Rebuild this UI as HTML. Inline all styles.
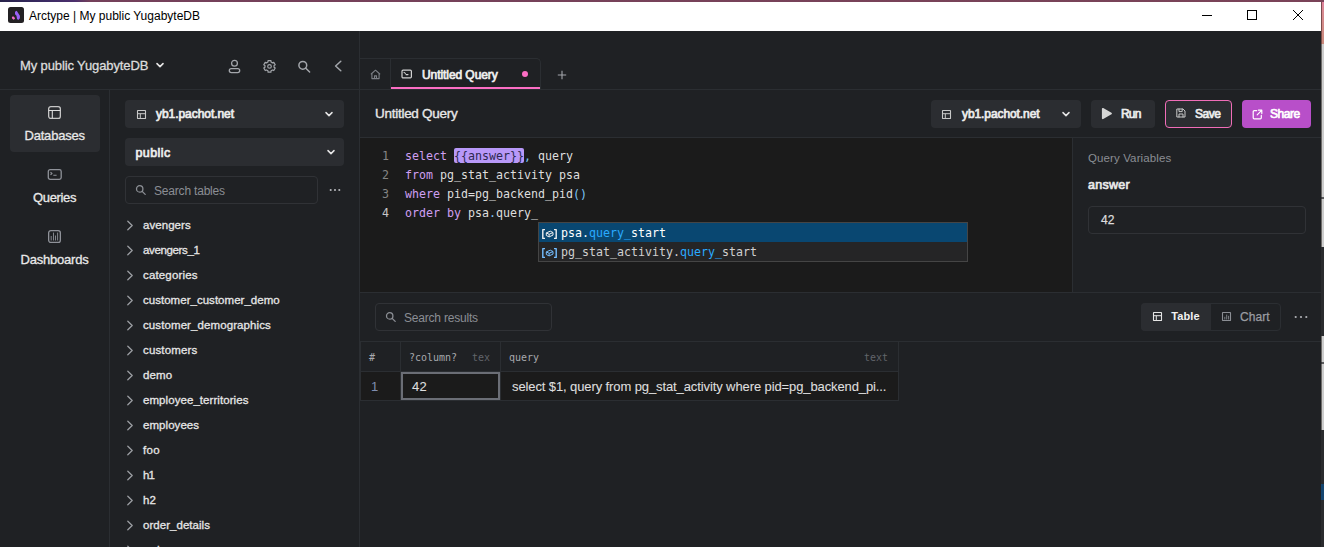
<!DOCTYPE html>
<html lang="en">
<head>
<meta charset="utf-8">
<title>Arctype | My public YugabyteDB</title>
<style>
*{box-sizing:border-box;margin:0;padding:0}
html,body{width:1324px;height:547px;overflow:hidden;background:#1f2124}
body{position:relative;font-family:"Liberation Sans",sans-serif;color:#e6e6e6;font-size:12px;-webkit-font-smoothing:antialiased}
.a{position:absolute}
.t{position:absolute;white-space:nowrap;line-height:1;transform:translateY(-50%)}
.hl{position:absolute;height:1px;background:#2b2e32}
.vl{position:absolute;width:1px;background:#2b2e32}
.btn{position:absolute;background:#2b2d31;border-radius:4px}
.m{font-family:"DejaVu Sans Mono","Liberation Mono",monospace}
.b{font-weight:normal;-webkit-text-stroke:0.7px currentColor}
svg{position:absolute;overflow:visible}
.ic{fill:none;stroke:#a3a6ab;stroke-width:1.3;stroke-linecap:round;stroke-linejoin:round}
.code{position:absolute;left:405px;font-family:"DejaVu Sans Mono","Liberation Mono",monospace;font-size:11.63px;line-height:19px;height:19px;white-space:pre;color:#dedede}
.ln{position:absolute;left:372px;width:17px;text-align:right;font-family:"DejaVu Sans Mono","Liberation Mono",monospace;font-size:11.63px;line-height:19px;height:19px;color:#858585}
.kw{color:#cf9ff2}
.br{color:#7cc5f6}
.dl{color:#7cc5f6}
.li{position:absolute;left:143px;white-space:nowrap;line-height:1;transform:translateY(-50%);font-size:11.5px;color:#e6e6e6;-webkit-text-stroke:0.3px #e6e6e6}
</style>
</head>
<body>
<!-- window chrome -->
<div class="a" id="topstrip" style="left:0;top:0;width:1324px;height:2px;background:linear-gradient(90deg,#27224a 0px,#3a2a63 45px,#4c2f6c 75px,#74405a 90px,#7a4358 1324px)"></div>
<div class="a" id="titlebar" style="left:0;top:2px;width:1321px;height:29px;background:#fff"></div>
<div class="a" style="left:8px;top:7px;width:16px;height:16px;border-radius:2.5px;background:#232124"></div>
<svg style="left:8px;top:7px" width="16" height="16" viewBox="0 0 16 16"><path d="M7 4.700L8.700 3.800L11.900 8.700V11.300L10.300 12.900L9 12.100L8.500 8.700L7 7.200Z" fill="#9960f6"/><path d="M3.900 9.900L5.200 9.200L7 10.900L6.700 12.100L5.600 12.700L4.100 11.600Z" fill="#f56cca"/></svg>
<div class="t" style="left:29px;top:16px;font-size:12px;color:#000">Arctype | My public YugabyteDB</div>
<svg style="left:1200px;top:8px" width="110" height="16" viewBox="0 0 110 16"><g fill="none" stroke="#000" stroke-width="1"><path d="M2 7.5H12"/><rect x="47.5" y="2.5" width="9" height="9"/><path d="M93 2L103 12M103 2L93 12"/></g></svg>

<!-- right strip of background window -->
<div class="a" style="left:1321px;top:2px;width:1px;height:545px;background:linear-gradient(180deg,#7a4a50 0px,#7c5048 42px,#6e6c6a 42px,#6e6c6a 195px,#3a3a3c 195px,#3a3a3c 197px,#6e6c6a 197px,#6e6c6a 245px,#2a2b2e 245px,#2a2b2e 334px,#6e6c6a 334px,#6e6c6a 360px,#3a3a3c 360px,#3a3a3c 362px,#6e6c6a 362px,#6e6c6a 428px,#2a2b2e 428px,#2a2b2e 482px,#14456f 482px,#14456f 498px,#2a2b2e 498px)"></div>
<div class="a" style="left:1322px;top:2px;width:2px;height:545px;background:linear-gradient(180deg,#e0809c 0px,#d88a90 10px,#c98a7c 42px,#cdcdcd 42px,#cdcdcd 195px,#5a5a5c 195px,#5a5a5c 197px,#cdcdcd 197px,#cdcdcd 245px,#2a2b2e 245px,#2a2b2e 334px,#cdcdcd 334px,#cdcdcd 360px,#5a5a5c 360px,#5a5a5c 362px,#cdcdcd 362px,#cdcdcd 428px,#2a2b2e 428px,#2a2b2e 482px,#14456f 482px,#14456f 498px,#2a2b2e 498px)"></div>

<!-- structural lines -->
<div class="vl" style="left:359px;top:31px;height:516px"></div>
<div class="hl" style="left:0;top:89px;width:1321px"></div>
<div class="vl" style="left:109px;top:90px;height:457px"></div>
<div class="hl" style="left:360px;top:137px;width:961px"></div>
<div class="a" id="editor" style="left:360px;top:138px;width:712px;height:154px;background:#1b1b1b"></div>
<div class="vl" style="left:1072px;top:138px;height:154px"></div>
<div class="hl" style="left:360px;top:292px;width:961px"></div>
<div class="hl" style="left:360px;top:341px;width:961px"></div>

<!-- sidebar header -->
<div class="t b" id="t_ws" style="letter-spacing:-0.118px;left:20px;top:65px;font-size:13px;color:#dcdcdc;font-weight:normal;-webkit-text-stroke:0.3px #dcdcdc">My public YugabyteDB</div>
<svg style="left:155px;top:60px" width="10" height="10" viewBox="0 0 10 10"><path d="M2 3.6L5 6.6L8 3.6" fill="none" stroke="#e6e6e6" stroke-width="1.6" stroke-linecap="round" stroke-linejoin="round"/></svg>
<svg style="left:226px;top:58px" width="120" height="18" viewBox="0 0 120 18" class="ic">
 <circle cx="8.5" cy="5.2" r="2.9"/><rect x="3.3" y="10.6" width="10.4" height="4" rx="2"/>
 <path d="M44.94 2.63L42.06 2.63L41.93 4.08L40.54 4.88L39.22 4.27L37.78 6.76L38.97 7.60L38.97 9.20L37.78 10.04L39.22 12.53L40.54 11.92L41.93 12.72L42.06 14.17L44.94 14.17L45.07 12.72L46.46 11.92L47.78 12.53L49.22 10.04L48.03 9.20L48.03 7.60L49.22 6.76L47.78 4.27L46.46 4.88L45.07 4.08Z" stroke-width="1.2"/><circle cx="43.5" cy="8.4" r="1.800" stroke-width="1.2"/>
 <circle cx="76.8" cy="7.3" r="3.9" stroke-width="1.5"/><path d="M79.8 10.3L83.6 14" stroke-width="1.5"/>
 <path d="M114.8 3.2L109.6 8L114.8 12.8" stroke-width="1.5"/>
</svg>

<!-- nav column -->
<div class="btn" style="left:10px;top:95px;width:90px;height:57px;border-radius:4px"></div>
<svg style="left:47px;top:105px" width="15" height="15" viewBox="0 0 15 15" fill="none" stroke="#c6c6c6" stroke-width="1.3"><rect x="1.650" y="1.650" width="11.700" height="11.700" rx="2.200"/><path d="M1.650 5.500H13.350M5.300 5.500V13.350" stroke="#dcdcdc" stroke-width="1.100"/></svg>
<div class="t" id="t_db" style="letter-spacing:-0.206px;left:24.5px;top:135px;font-size:13px;color:#e8e8e8;-webkit-text-stroke:0.3px #e8e8e8">Databases</div>
<svg style="left:47px;top:168px" width="16" height="14" viewBox="0 0 16 14" fill="none" stroke="#8f9299" stroke-width="1.3"><rect x="1.300" y="1.650" width="12.900" height="9.700" rx="1.800"/><path d="M3.500 4.300L5 5.500L3.500 6.700M6.300 7.300H9.600" stroke-width="1.100" stroke-linejoin="round"/></svg>
<div class="t" id="t_q" style="letter-spacing:-0.347px;left:33px;top:197px;font-size:13px;color:#e8e8e8;-webkit-text-stroke:0.3px #e8e8e8">Queries</div>
<svg style="left:47px;top:229px" width="15" height="15" viewBox="0 0 15 15" fill="none" stroke="#8f9299" stroke-width="1.3"><rect x="1.650" y="1.650" width="11.700" height="11.700" rx="2.200"/><path d="M4.200 7V11.500M6.500 3.600V11.500M8.500 6.500V11.500M10.600 3.600V11.500" stroke-width=".9"/></svg>
<div class="t" id="t_d" style="letter-spacing:-0.211px;left:20.5px;top:259px;font-size:13px;color:#e8e8e8;-webkit-text-stroke:0.3px #e8e8e8">Dashboards</div>

<!-- sidebar dropdowns -->
<div class="btn" style="left:125px;top:100px;width:219px;height:28px"></div>
<svg style="left:137px;top:110px" width="10" height="10" viewBox="0 0 10 10" class="ic"><rect x=".5" y=".5" width="8" height="8" rx=".3" stroke="#c8c8c8" stroke-width="1.100" stroke-linejoin="miter"/><path d="M.5 3.700H8.500M3.300 3.700V8.500" stroke="#c8c8c8" stroke-width="1" stroke-linecap="butt"/></svg>
<div class="t b" id="t_conn1" style="letter-spacing:-0.052px;left:156px;top:114px;font-size:12px;color:#ededed">yb1.pachot.net</div>
<svg style="left:324px;top:109px" width="10" height="10" viewBox="0 0 10 10"><path d="M2 3.6L5 6.6L8 3.6" fill="none" stroke="#e6e6e6" stroke-width="1.5" stroke-linecap="round" stroke-linejoin="round"/></svg>
<div class="btn" style="left:125px;top:138px;width:219px;height:28px"></div>
<div class="t b" id="t_pub" style="letter-spacing:0.405px;left:135.5px;top:152.5px;font-size:12.5px;color:#ededed">public</div>
<svg style="left:326px;top:147px" width="10" height="10" viewBox="0 0 10 10"><path d="M2 3.6L5 6.6L8 3.6" fill="none" stroke="#e6e6e6" stroke-width="1.5" stroke-linecap="round" stroke-linejoin="round"/></svg>
<div class="a" style="left:125px;top:176px;width:193px;height:28px;border:1px solid #303236;border-radius:4px"></div>
<svg style="left:135px;top:184px" width="12" height="12" viewBox="0 0 12 12" class="ic"><circle cx="4.700" cy="4.900" r="3.200" stroke="#8b8e94" stroke-width="1.300"/><path d="M7.200 7.400L10.200 10.400" stroke="#8b8e94" stroke-width="1.300"/></svg>
<div class="t" id="t_st" style="letter-spacing:-0.192px;left:154px;top:190.5px;font-size:12px;color:#8b8e94">Search tables</div>
<svg style="left:329px;top:188px" width="12" height="4" viewBox="0 0 12 4"><circle cx="1.700" cy="2" r="1.050" fill="#b4b6ba"/><circle cx="6" cy="2" r="1.050" fill="#b4b6ba"/><circle cx="10.300" cy="2" r="1.050" fill="#b4b6ba"/></svg>

<!-- table list -->
<div id="list">
<svg style="left:126px;top:220px" width="8" height="11" viewBox="0 0 8 11"><path d="M1.8 1.2L6.2 5.5L1.8 9.800" fill="none" stroke="#9a9da2" stroke-width="1.3" stroke-linecap="round" stroke-linejoin="round"/></svg><div class="li" style="letter-spacing:0.048px;top:225.5px">avengers</div>
<svg style="left:126px;top:245px" width="8" height="11" viewBox="0 0 8 11"><path d="M1.8 1.2L6.2 5.5L1.8 9.800" fill="none" stroke="#9a9da2" stroke-width="1.3" stroke-linecap="round" stroke-linejoin="round"/></svg><div class="li" style="letter-spacing:-0.361px;top:250.5px">avengers_1</div>
<svg style="left:126px;top:270px" width="8" height="11" viewBox="0 0 8 11"><path d="M1.8 1.2L6.2 5.5L1.8 9.800" fill="none" stroke="#9a9da2" stroke-width="1.3" stroke-linecap="round" stroke-linejoin="round"/></svg><div class="li" style="letter-spacing:0.154px;top:275.5px">categories</div>
<svg style="left:126px;top:295px" width="8" height="11" viewBox="0 0 8 11"><path d="M1.8 1.2L6.2 5.5L1.8 9.800" fill="none" stroke="#9a9da2" stroke-width="1.3" stroke-linecap="round" stroke-linejoin="round"/></svg><div class="li" style="letter-spacing:0.025px;top:300.5px">customer_customer_demo</div>
<svg style="left:126px;top:320px" width="8" height="11" viewBox="0 0 8 11"><path d="M1.8 1.2L6.2 5.5L1.8 9.800" fill="none" stroke="#9a9da2" stroke-width="1.3" stroke-linecap="round" stroke-linejoin="round"/></svg><div class="li" style="letter-spacing:0.094px;top:325.5px">customer_demographics</div>
<svg style="left:126px;top:345px" width="8" height="11" viewBox="0 0 8 11"><path d="M1.8 1.2L6.2 5.5L1.8 9.800" fill="none" stroke="#9a9da2" stroke-width="1.3" stroke-linecap="round" stroke-linejoin="round"/></svg><div class="li" style="letter-spacing:0.139px;top:350.5px">customers</div>
<svg style="left:126px;top:370px" width="8" height="11" viewBox="0 0 8 11"><path d="M1.8 1.2L6.2 5.5L1.8 9.800" fill="none" stroke="#9a9da2" stroke-width="1.3" stroke-linecap="round" stroke-linejoin="round"/></svg><div class="li" style="letter-spacing:0.155px;top:375.5px">demo</div>
<svg style="left:126px;top:395px" width="8" height="11" viewBox="0 0 8 11"><path d="M1.8 1.2L6.2 5.5L1.8 9.800" fill="none" stroke="#9a9da2" stroke-width="1.3" stroke-linecap="round" stroke-linejoin="round"/></svg><div class="li" style="letter-spacing:0.066px;top:400.5px">employee_territories</div>
<svg style="left:126px;top:420px" width="8" height="11" viewBox="0 0 8 11"><path d="M1.8 1.2L6.2 5.5L1.8 9.800" fill="none" stroke="#9a9da2" stroke-width="1.3" stroke-linecap="round" stroke-linejoin="round"/></svg><div class="li" style="letter-spacing:0.053px;top:425.5px">employees</div>
<svg style="left:126px;top:445px" width="8" height="11" viewBox="0 0 8 11"><path d="M1.8 1.2L6.2 5.5L1.8 9.800" fill="none" stroke="#9a9da2" stroke-width="1.3" stroke-linecap="round" stroke-linejoin="round"/></svg><div class="li" style="letter-spacing:0.300px;top:450.5px">foo</div>
<svg style="left:126px;top:470px" width="8" height="11" viewBox="0 0 8 11"><path d="M1.8 1.2L6.2 5.5L1.8 9.800" fill="none" stroke="#9a9da2" stroke-width="1.3" stroke-linecap="round" stroke-linejoin="round"/></svg><div class="li" style="letter-spacing:-0.998px;top:475.5px">h1</div>
<svg style="left:126px;top:495px" width="8" height="11" viewBox="0 0 8 11"><path d="M1.8 1.2L6.2 5.5L1.8 9.800" fill="none" stroke="#9a9da2" stroke-width="1.3" stroke-linecap="round" stroke-linejoin="round"/></svg><div class="li" style="letter-spacing:0.052px;top:500.5px">h2</div>
<svg style="left:126px;top:520px" width="8" height="11" viewBox="0 0 8 11"><path d="M1.8 1.2L6.2 5.5L1.8 9.800" fill="none" stroke="#9a9da2" stroke-width="1.3" stroke-linecap="round" stroke-linejoin="round"/></svg><div class="li" style="letter-spacing:0.040px;top:525.5px">order_details</div>
<svg style="left:126px;top:545px" width="8" height="11" viewBox="0 0 8 11"><path d="M1.8 1.2L6.2 5.5L1.8 9.800" fill="none" stroke="#9a9da2" stroke-width="1.3" stroke-linecap="round" stroke-linejoin="round"/></svg><div class="li" style="letter-spacing:0.065px;top:550.5px">orders</div>
</div>

<!-- tabs -->
<div class="hl" style="left:360px;top:58px;width:177px"></div>
<div class="a" style="left:390px;top:58px;width:151px;height:31px;border:1px solid #2b2e32;border-bottom:none;border-radius:0 5px 0 0"></div>
<div class="a" style="left:391px;top:87px;width:149px;height:2px;background:#fb6ec4"></div>
<svg style="left:370px;top:69px" width="11" height="11" viewBox="0 0 11 11" class="ic"><path d="M1.200 5L5.500 1.200L9.800 5M1.900 4.600V9.600H9.100V4.600M4.500 9.600V6.900H6.500V9.600" stroke="#7d8087" stroke-width="1.1"/></svg>
<svg style="left:401px;top:69px" width="12" height="10" viewBox="0 0 12 10" class="ic"><rect x="1" y="1.2" width="9.4" height="7.6" rx="1.1" stroke="#d2d2d2" stroke-width="1.2"/><path d="M3 3.4L4.4 4.4M5 5.6H7" stroke="#d2d2d2" stroke-width="1.1"/></svg>
<div class="t b" id="t_tab" style="letter-spacing:-0.072px;left:422px;top:74.5px;font-size:12px;color:#efefef">Untitled Query</div>
<div class="a" style="left:522px;top:71px;width:6px;height:6px;border-radius:50%;background:#fb6ec4"></div>
<svg style="left:556.5px;top:69.5px" width="10" height="10" viewBox="0 0 10 10"><path d="M5 .8V9.2M.8 5H9.2" stroke="#a3a6ab" stroke-width="1.1" fill="none"/></svg>

<!-- query header -->
<div class="t" id="t_title" style="letter-spacing:-0.271px;left:375px;top:114px;font-size:13.5px;color:#e8e8e8;-webkit-text-stroke:0.35px #e8e8e8">Untitled Query</div>
<div class="btn" style="left:931px;top:100px;width:150px;height:28px"></div>
<svg style="left:942px;top:110px" width="10" height="10" viewBox="0 0 10 10" class="ic"><rect x=".5" y=".5" width="8" height="8" rx=".3" stroke="#c8c8c8" stroke-width="1.100" stroke-linejoin="miter"/><path d="M.5 3.700H8.500M3.300 3.700V8.500" stroke="#c8c8c8" stroke-width="1" stroke-linecap="butt"/></svg>
<div class="t b" id="t_conn2" style="letter-spacing:-0.088px;left:962px;top:114px;font-size:12px;color:#ededed">yb1.pachot.net</div>
<svg style="left:1061px;top:109px" width="10" height="10" viewBox="0 0 10 10"><path d="M2 3.6L5 6.6L8 3.6" fill="none" stroke="#e6e6e6" stroke-width="1.5" stroke-linecap="round" stroke-linejoin="round"/></svg>
<div class="btn" style="left:1091px;top:100px;width:64px;height:28px"></div>
<svg style="left:1101px;top:106.800px" width="12" height="13" viewBox="0 0 12 13"><path d="M1.800 1.800L10 6.500L1.800 11.200Z" fill="#d6d6d6" stroke="#d6d6d6" stroke-width="1.800" stroke-linejoin="round"/></svg>
<div class="t b" id="t_run" style="letter-spacing:-0.839px;left:1121px;top:113.5px;font-size:12px;color:#ededed">Run</div>
<div class="btn" style="left:1165px;top:100px;width:67px;height:28px;border:1px solid #f06db8"></div>
<svg style="left:1176.300px;top:108.300px" width="10" height="10" viewBox="0 0 10 10" class="ic"><path d="M1.200 1H7L9 3V9H1.200Z M3 1V3.600H6.200V1 M3 9V6H7V9" stroke="#c8c8c8" stroke-width="1" stroke-linejoin="miter"/></svg>
<div class="t b" id="t_save" style="letter-spacing:-0.515px;left:1195px;top:113.5px;font-size:12px;color:#ededed">Save</div>
<div class="btn" style="left:1242px;top:100px;width:69px;height:28px;background:#b84fc9"></div>
<svg style="left:1252px;top:109px" width="11" height="11" viewBox="0 0 11 11" class="ic"><path d="M4.600 1.700H2.200Q1.200 1.700 1.200 2.700V8.800Q1.200 9.800 2.200 9.800H8.300Q9.300 9.800 9.300 8.800V6.400M6.400 1.200H9.800V4.600M9.600 1.400L5.200 5.800" stroke="#fff" stroke-width="1.2"/></svg>
<div class="t b" id="t_share" style="letter-spacing:-0.486px;left:1270px;top:114px;font-size:12px;color:#fff">Share</div>

<!-- editor -->
<div class="ln" style="top:147px">1</div>
<div class="ln" style="top:166px">2</div>
<div class="ln" style="top:185px">3</div>
<div class="ln" style="top:204px;color:#c6c6c6">4</div>
<div class="a" style="left:454px;top:148px;width:70px;height:15px;background:#b898f8;border-radius:2px"></div>
<div class="code" style="top:147px"><span class="kw">select</span> <span style="color:#2c2850">{{answer}}</span><span class="dl">,</span> query</div>
<div class="code" style="top:166px"><span class="kw">from</span> pg_stat_activity psa</div>
<div class="code" style="top:185px"><span class="kw">where</span> pid=pg_backend_pid<span class="br">()</span></div>
<div class="code" style="top:204px"><span class="kw">order by</span> psa<span class="dl">.</span>query_</div>

<!-- autocomplete -->
<div class="a" style="left:538px;top:222px;width:430px;height:40px;background:#252526;border:1px solid #454545"></div>
<div class="a" style="left:539px;top:223px;width:428px;height:19px;background:#094771"></div>
<svg style="left:541.5px;top:228.5px" width="15" height="10" viewBox="0 0 15 10" fill="none" stroke="#f0f0f0" stroke-width="1.2" stroke-linejoin="round"><path d="M3 .6H.8V9.400H3M12 .6H14.200V9.400H12" stroke-width="1.4"/><path d="M4.300 3.900L8.300 2.200L11 3.500L7.100 5.300ZM4.300 3.900V6.500L7.100 7.900V5.300M7.100 7.900L11 6.100V3.500" stroke-width="1"/></svg>
<svg style="left:541.5px;top:247.5px" width="15" height="10" viewBox="0 0 15 10" fill="none" stroke="#75beff" stroke-width="1.2" stroke-linejoin="round"><path d="M3 .6H.8V9.400H3M12 .6H14.200V9.400H12" stroke-width="1.4"/><path d="M4.300 3.900L8.300 2.200L11 3.500L7.100 5.300ZM4.300 3.900V6.500L7.100 7.900V5.300M7.100 7.900L11 6.100V3.500" stroke-width="1"/></svg>
<div class="code" style="left:561px;top:224px;color:#fff">psa.<span style="color:#2aaaff">query_</span>start</div>
<div class="code" style="left:561px;top:243px;color:#d0d0d0">pg_stat_activity.<span style="color:#2aaaff">query_</span>start</div>

<!-- query variables -->
<div class="t" id="t_qv" style="letter-spacing:0.113px;left:1088px;top:158.500px;font-size:11.5px;color:#8b8e94">Query Variables</div>
<div class="t b" id="t_ans" style="letter-spacing:0.251px;left:1088px;top:184.500px;font-size:12.5px;color:#e8e8e8">answer</div>
<div class="a" style="left:1088px;top:206px;width:218px;height:28px;border:1px solid #303236;border-radius:4px"></div>
<div class="t" id="t_42a" style="letter-spacing:0.070px;left:1101px;top:220px;font-size:12px;color:#dcdcdc;-webkit-text-stroke:0.25px #dcdcdc">42</div>

<!-- results toolbar -->
<div class="a" style="left:375px;top:303px;width:177px;height:28px;border:1px solid #303236;border-radius:4px"></div>
<svg style="left:385px;top:311px" width="12" height="12" viewBox="0 0 12 12" class="ic"><circle cx="4.700" cy="4.900" r="3.200" stroke="#8b8e94" stroke-width="1.300"/><path d="M7.200 7.400L10.200 10.400" stroke="#8b8e94" stroke-width="1.300"/></svg>
<div class="t" id="t_sr" style="letter-spacing:-0.207px;left:404px;top:317.5px;font-size:12px;color:#8b8e94">Search results</div>
<div class="a" style="left:1141px;top:303px;width:140px;height:28px;border:1px solid #2b2e32;border-radius:4px"></div>
<div class="a" style="left:1141px;top:303px;width:70px;height:28px;background:#2b2d31;border-radius:4px 0 0 4px"></div>
<svg style="left:1153px;top:312px" width="10" height="10" viewBox="0 0 10 10" class="ic"><rect x=".5" y=".5" width="8" height="8" rx=".3" stroke="#e6e6e6" stroke-width="1.100" stroke-linejoin="miter"/><path d="M.5 3.700H8.500M3.300 3.700V8.500" stroke="#e6e6e6" stroke-width="1" stroke-linecap="butt"/></svg>
<div class="t" id="t_table" style="letter-spacing:0.096px;left:1171.300px;top:316px;font-size:11px;font-weight:bold;color:#f2f2f2">Table</div>
<svg style="left:1222px;top:312px" width="10" height="10" viewBox="0 0 10 10" class="ic"><rect x=".5" y=".5" width="8" height="8" rx=".3" stroke="#8b8e94" stroke-width="1.100" stroke-linejoin="miter"/><path d="M2.800 7.500V4.800M4.700 7.500V2.600M6.600 7.500V3.800" stroke="#7d8086" stroke-width="1" stroke-linecap="butt"/></svg>
<div class="t" id="t_chart" style="letter-spacing:0.051px;left:1240px;top:317px;font-size:12px;color:#9a9ca1;-webkit-text-stroke:0.25px #9a9ca1">Chart</div>
<svg style="left:1294px;top:314.600px" width="14" height="4" viewBox="0 0 14 4"><circle cx="1.700" cy="2" r="1.1" fill="#b0b2b6"/><circle cx="7" cy="2" r="1.1" fill="#b0b2b6"/><circle cx="12.300" cy="2" r="1.1" fill="#b0b2b6"/></svg>

<!-- results table -->
<div class="a" style="left:361px;top:372px;width:537px;height:28px;background:#1b1b1b"></div>
<div class="vl" style="left:360px;top:342px;height:59px"></div>
<div class="vl" style="left:400px;top:342px;height:59px"></div>
<div class="vl" style="left:500px;top:342px;height:59px"></div>
<div class="vl" style="left:898px;top:342px;height:59px"></div>
<div class="hl" style="left:360px;top:371px;width:539px"></div>
<div class="hl" style="left:360px;top:400px;width:539px"></div>
<div class="t m" style="left:369px;top:357.5px;font-size:9.97px;color:#a8aaae">#</div>
<div class="t m" id="t_col" style="left:409px;top:357.5px;font-size:9.97px;color:#a8aaae">?column?</div>
<div class="t m" style="left:472px;top:357.5px;font-size:9.97px;color:#62656b">tex</div>
<div class="t m" style="left:509px;top:357.5px;font-size:9.97px;color:#a8aaae">query</div>
<div class="t m" style="left:864px;top:357.5px;font-size:9.97px;color:#62656b">text</div>
<div class="t" style="left:371px;top:385.5px;font-size:13px;color:#7f8db0">1</div>
<div class="a" style="left:401px;top:372px;width:99px;height:28px;border:2px solid #6b6e76;border-radius:0"></div>
<div class="t" id="t_42b" style="letter-spacing:0.266px;left:412px;top:385.5px;font-size:13px;color:#dedede;-webkit-text-stroke:0.1px #dedede">42</div>
<div class="t" id="t_sel" style="letter-spacing:-0.105px;left:512px;top:385.5px;font-size:13px;color:#dedede;-webkit-text-stroke:0.1px #dedede">select $1, query from pg_stat_activity where pid=pg_backend_pi...</div>

</body>
</html>
